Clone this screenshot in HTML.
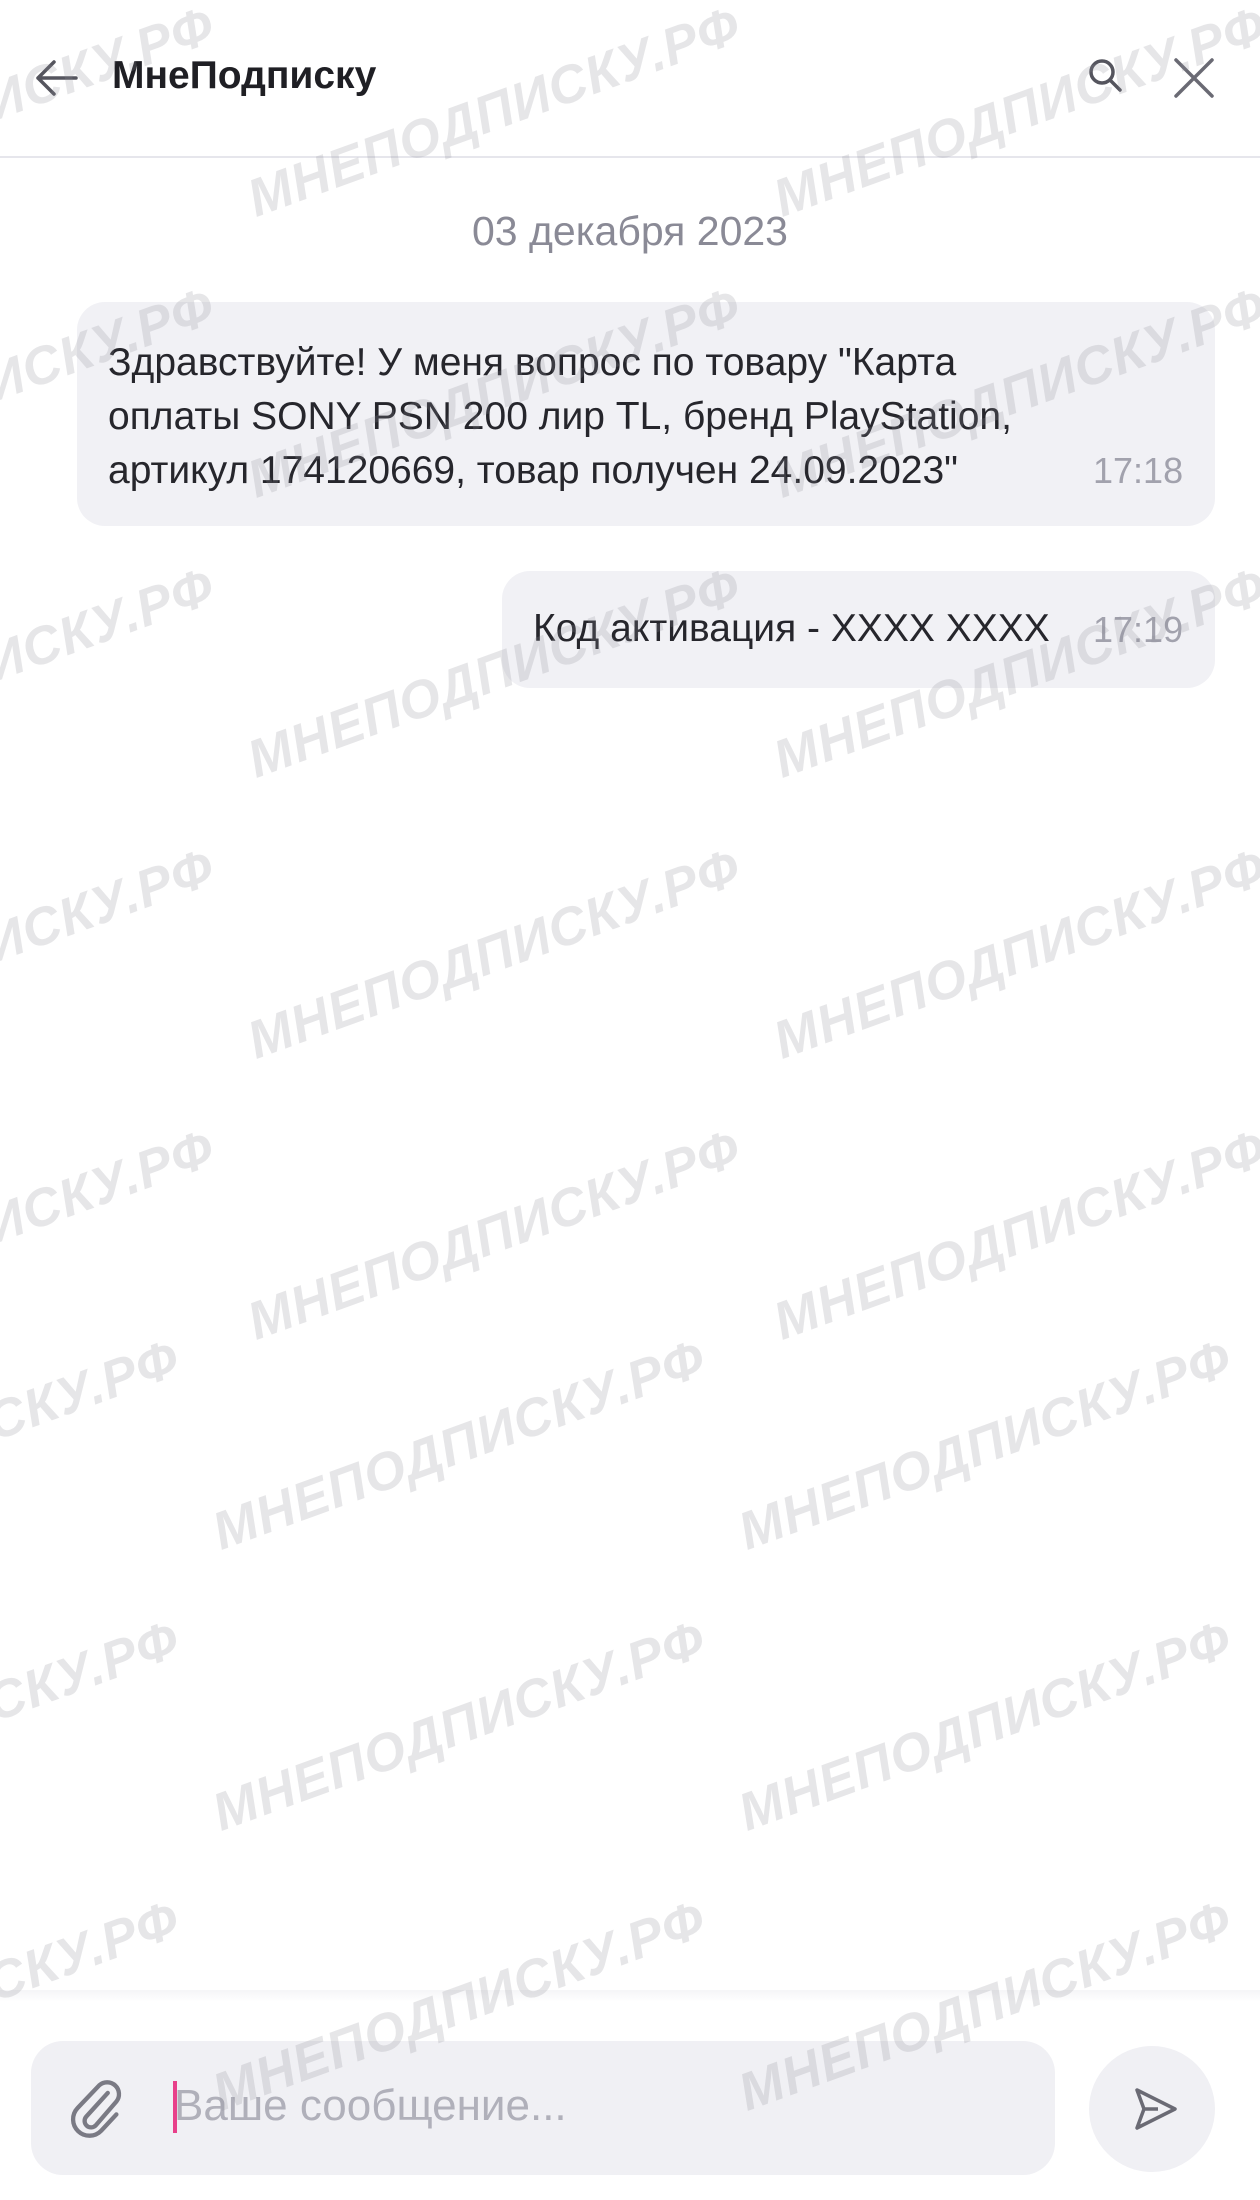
<!DOCTYPE html>
<html style="width:1260px;height:2200px;overflow:hidden"><head><meta charset="utf-8"><style>
*{margin:0;padding:0;box-sizing:border-box}
body{width:1260px;height:2200px;background:#fff;position:relative;overflow:hidden;font-family:"Liberation Sans","Noto Sans CJK SC",sans-serif;color:#1f1f24}
.hdr{position:absolute;left:0;top:0;width:1260px;height:158px;border-bottom:2px solid #e6e6ec}
.title{position:absolute;left:112px;top:54px;font-size:39px;font-weight:bold;color:#1f1f24}
.date{position:absolute;left:0;width:1260px;top:208px;text-align:center;font-size:41px;color:#8a8a96}
.b1{position:absolute;left:77px;top:302px;width:1138px;height:224px;background:#f1f1f5;border-radius:28px}
.b1 .t{position:absolute;left:31px;top:34px;font-size:39px;line-height:54px;color:#26262c;white-space:nowrap}
.time{position:absolute;font-size:36px;color:#a2a2ad}
.b2{position:absolute;left:502px;top:571px;width:713px;height:117px;background:#f1f1f5;border-radius:28px}
.bot{position:absolute;left:0;top:1990px;width:1260px;height:210px;background:linear-gradient(#f5f5f7,#fff 12px)}
.inp{position:absolute;left:31px;top:2041px;width:1024px;height:134px;background:#f0f0f4;border-radius:32px}
.ph{position:absolute;left:143px;top:40px;font-size:44px;color:#b0b0ba}
.cur{position:absolute;left:142px;top:40px;width:4px;height:52px;background:#e8408a}
.send{position:absolute;left:1089px;top:2046px;width:126px;height:126px;border-radius:50%;background:#f0f0f4}
.wm{position:absolute;font-size:53px;font-weight:bold;font-style:italic;color:rgba(140,140,150,0.22);white-space:nowrap;transform:translate(-50%,-50%) rotate(-20deg);z-index:10;letter-spacing:1px}
</style></head><body>
<div class="hdr">
<svg style="position:absolute;left:32px;top:58px" width="48" height="40" viewBox="0 0 48 40"><path d="M44 20H6M22 4L6 20l16 16" fill="none" stroke="#55555e" stroke-width="3.5" stroke-linecap="round" stroke-linejoin="round"/></svg>
<div class="title">МнеПодписку</div>
<svg style="position:absolute;left:1086px;top:56px" width="40" height="40" viewBox="0 0 40 40"><circle cx="16" cy="16" r="11" fill="none" stroke="#55555e" stroke-width="3.5"/><path d="M24 24l10 10" stroke="#55555e" stroke-width="3.5" stroke-linecap="round"/></svg>
<svg style="position:absolute;left:1172px;top:56px" width="44" height="44" viewBox="0 0 44 44"><path d="M4 4l36 36M40 4L4 40" stroke="#6a6a74" stroke-width="3.5" stroke-linecap="round"/></svg>
</div>
<div class="date">03 декабря 2023</div>
<div class="b1"><div class="t">Здравствуйте! У меня вопрос по товару "Карта<br>оплаты SONY PSN 200 лир TL, бренд PlayStation,<br>артикул 174120669, товар получен 24.09.2023"</div>
<div class="time" style="left:1016px;top:148px">17:18</div></div>
<div class="b2"><div style="position:absolute;left:31px;top:36px;font-size:39px;color:#26262c">Код активация - XXXX XXXX</div>
<div class="time" style="left:591px;top:38px">17:19</div></div>
<div class="bot"></div>
<div class="inp">
<svg style="position:absolute;left:38px;top:36px" width="56" height="62" viewBox="0 0 52 56"><path d="M36 14L16 36a6 6 0 0 0 9 8L44 22a11 11 0 0 0-16-15L8 28a15 15 0 0 0 22 21l14-15" fill="none" stroke="#7a7a84" stroke-width="4" stroke-linecap="round"/></svg>
<div class="cur"></div><div class="ph">Ваше сообщение...</div></div>
<div class="send"><svg style="position:absolute;left:44px;top:40px" width="46" height="46" viewBox="0 0 46 46"><path d="M4 4l38 19L4 42l7-19z M11 23h14" fill="none" stroke="#6a6a74" stroke-width="3.5" stroke-linejoin="round"/></svg></div>
<div class="wm" style="left:-32px;top:112px">МНЕПОДПИСКУ.РФ</div><div class="wm" style="left:494px;top:112px">МНЕПОДПИСКУ.РФ</div><div class="wm" style="left:1020px;top:112px">МНЕПОДПИСКУ.РФ</div>
<div class="wm" style="left:-32px;top:393px">МНЕПОДПИСКУ.РФ</div><div class="wm" style="left:494px;top:393px">МНЕПОДПИСКУ.РФ</div><div class="wm" style="left:1020px;top:393px">МНЕПОДПИСКУ.РФ</div>
<div class="wm" style="left:-32px;top:673px">МНЕПОДПИСКУ.РФ</div><div class="wm" style="left:494px;top:673px">МНЕПОДПИСКУ.РФ</div><div class="wm" style="left:1020px;top:673px">МНЕПОДПИСКУ.РФ</div>
<div class="wm" style="left:-32px;top:954px">МНЕПОДПИСКУ.РФ</div><div class="wm" style="left:494px;top:954px">МНЕПОДПИСКУ.РФ</div><div class="wm" style="left:1020px;top:954px">МНЕПОДПИСКУ.РФ</div>
<div class="wm" style="left:-32px;top:1235px">МНЕПОДПИСКУ.РФ</div><div class="wm" style="left:494px;top:1235px">МНЕПОДПИСКУ.РФ</div><div class="wm" style="left:1020px;top:1235px">МНЕПОДПИСКУ.РФ</div>
<div class="wm" style="left:-67px;top:1445px">МНЕПОДПИСКУ.РФ</div><div class="wm" style="left:459px;top:1445px">МНЕПОДПИСКУ.РФ</div><div class="wm" style="left:985px;top:1445px">МНЕПОДПИСКУ.РФ</div>
<div class="wm" style="left:-67px;top:1726px">МНЕПОДПИСКУ.РФ</div><div class="wm" style="left:459px;top:1726px">МНЕПОДПИСКУ.РФ</div><div class="wm" style="left:985px;top:1726px">МНЕПОДПИСКУ.РФ</div>
<div class="wm" style="left:-67px;top:2006px">МНЕПОДПИСКУ.РФ</div><div class="wm" style="left:459px;top:2006px">МНЕПОДПИСКУ.РФ</div><div class="wm" style="left:985px;top:2006px">МНЕПОДПИСКУ.РФ</div>
</body></html>
